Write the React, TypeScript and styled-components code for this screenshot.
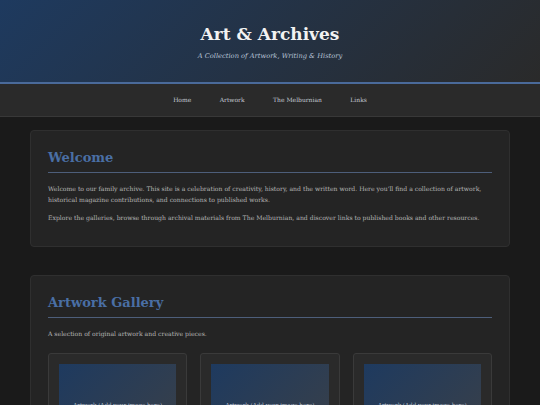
import React from 'react'
import styled, { createGlobalStyle } from 'styled-components'

const GlobalStyle = createGlobalStyle`
  html, body {
    margin: 0;
    padding: 0;
    background: #1a1a1a;
    font-family: 'DejaVu Serif', Georgia, serif;
    color: #b8b8b8;
  }
`

const Header = styled.header`
  background: linear-gradient(135deg, #1e3a5f 0%, #2a2a2a 100%);
  border-bottom: 2px solid #4a6a9a;
  height: 84px;
  box-sizing: border-box;
  padding-top: 23px;
  text-align: center;
`

const SiteTitle = styled.h1`
  margin: 0;
  font-size: 17px;
  font-weight: bold;
  color: #f2f2f2;
  line-height: 22px;
`

const Tagline = styled.p`
  margin: 7px 0 0;
  font-size: 6.7px;
  font-style: italic;
  color: #b8c4d6;
`

const Nav = styled.nav`
  background: #2a2a2a;
  border-bottom: 1px solid #383838;
  height: 32px;
  display: flex;
  align-items: center;
  justify-content: center;
  gap: 28.5px;
`

const NavLink = styled.a`
  font-size: 6px;
  color: #c4cad4;
  text-decoration: none;
  margin-top: -1px;
`

const Main = styled.main`
  padding: 13px 30px;
  display: flex;
  flex-direction: column;
  gap: 28px;
`

const Section = styled.section`
  background: #242424;
  border: 1px solid #2f2f2f;
  border-radius: 4px;
  padding: 18px 17px 23px;
`

const SectionTitle = styled.h2`
  margin: 0;
  font-size: 13px;
  font-weight: bold;
  color: #4a6fa5;
  padding-bottom: 5px;
  border-bottom: 1px solid #4d5e7a;
  line-height: 18px;
`

const Text = styled.p`
  margin: 10px 0 0;
  font-size: 6.13px;
  line-height: 11px;
  color: #b4b4b4;
  & + & {
    margin-top: 7px;
  }
`

const Gallery = styled.div`
  margin-top: 14px;
  display: grid;
  grid-template-columns: repeat(3, 1fr);
  gap: 13px;
`

const Piece = styled.div`
  background: #2a2a2a;
  border: 1px solid #3a3a3a;
  border-radius: 3px;
  padding: 10px;
`

const Placeholder = styled.div`
  height: 82px;
  background: linear-gradient(135deg, #1e3a5f 0%, #3a4048 100%);
  display: flex;
  align-items: center;
  justify-content: center;
  font-size: 5.6px;
  color: #c0c8d4;
`

const pieces = ['one', 'two', 'three']

export default function App() {
  return (
    <>
      <GlobalStyle />
      <Header>
        <SiteTitle>Art &amp; Archives</SiteTitle>
        <Tagline>A Collection of Artwork, Writing &amp; History</Tagline>
      </Header>
      <Nav>
        <NavLink href="#home">Home</NavLink>
        <NavLink href="#artwork">Artwork</NavLink>
        <NavLink href="#melburnian">The Melburnian</NavLink>
        <NavLink href="#links">Links</NavLink>
      </Nav>
      <Main>
        <Section>
          <SectionTitle>Welcome</SectionTitle>
          <Text>
            Welcome to our family archive. This site is a celebration of creativity, history, and the
            written word. Here you'll find a collection of artwork, historical magazine contributions,
            and connections to published works.
          </Text>
          <Text>
            Explore the galleries, browse through archival materials from The Melburnian, and discover
            links to published books and other resources.
          </Text>
        </Section>
        <Section>
          <SectionTitle>Artwork Gallery</SectionTitle>
          <Text>A selection of original artwork and creative pieces.</Text>
          <Gallery>
            {pieces.map((p) => (
              <Piece key={p}>
                <Placeholder>Artwork (Add your image here)</Placeholder>
              </Piece>
            ))}
          </Gallery>
        </Section>
      </Main>
    </>
  )
}
